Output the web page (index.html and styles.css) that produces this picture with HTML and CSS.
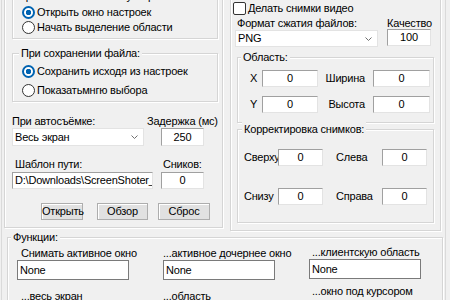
FILE: index.html
```html
<!DOCTYPE html>
<html lang="ru">
<head>
    <meta charset="UTF-8">
    <meta name="viewport" content="width=device-width, initial-scale=1.0">
    <title>Настройки ScreenShoter</title>
    <link rel="stylesheet" href="styles.css">
</head>
<body>

<div class="page">
    <div class="columns">

        <!-- левая колонка -->
        <div class="panel panel-left">
            <div class="group group-start">
                <div class="group-title">При нажатии на иконку в трее:</div>
                <div class="options">
                    <div class="option"><span class="radio on"></span>Открыть окно настроек</div>
                    <div class="option"><span class="radio"></span>Начать выделение области</div>
                </div>
            </div>

            <div class="group group-save">
                <div class="group-title">При сохранении файла:</div>
                <div class="options">
                    <div class="option"><span class="radio on"></span>Сохранить исходя из настроек</div>
                    <div class="option"><span class="radio"></span>Показатьмнгю выбора</div>
                </div>
            </div>

            <div class="row row-label row-auto">
                <span class="lbl-auto">При автосъёмке:</span>
                <span>Задержка (мс)</span>
            </div>
            <div class="row row-auto-ctrl">
                <div class="combo combo-auto">Весь экран
                    <svg viewBox="0 0 7 4"><polyline points="0.5,0.5 3.5,3.5 6.5,0.5"/></svg>
                </div>
                <div class="edit num edit-small">250</div>
            </div>

            <div class="row row-label row-path">
                <span class="lbl-path">Шаблон пути:</span>
                <span>Сников:</span>
            </div>
            <div class="row row-path-ctrl">
                <div class="edit edit-path">D:\Downloads\ScreenShoter_\</div>
                <div class="edit num edit-small">0</div>
            </div>

            <div class="buttons">
                <div class="btn btn-open">Открыть</div>
                <div class="btn btn-browse">Обзор</div>
                <div class="btn btn-reset">Сброс</div>
            </div>
        </div>

        <!-- правая колонка -->
        <div class="panel panel-right">
            <div class="check-row"><span class="check"></span>Делать снимки видео</div>

            <div class="row row-label row-format">
                <span class="lbl-format">Формат сжатия файлов:</span>
                <span>Качество</span>
            </div>
            <div class="row row-format-ctrl">
                <div class="combo combo-format">PNG
                    <svg viewBox="0 0 7 4"><polyline points="0.5,0.5 3.5,3.5 6.5,0.5"/></svg>
                </div>
                <div class="edit num edit-quality">100</div>
            </div>

            <div class="group group-area">
                <div class="group-title">Область:</div>
                <div class="area-row">
                    <span class="area-lbl">X</span>
                    <div class="edit num edit-x">0</div>
                    <span class="area-lbl2">Ширина</span>
                    <div class="edit num edit-w">0</div>
                </div>
                <div class="area-row area-row2">
                    <span class="area-lbl">Y</span>
                    <div class="edit num edit-x">0</div>
                    <span class="area-lbl2">Высота</span>
                    <div class="edit num edit-w">0</div>
                </div>
            </div>

            <div class="group group-fix">
                <div class="group-title">Корректировка снимков:</div>
                <div class="fix-row">
                    <span class="fix-lbl">Сверху</span>
                    <div class="edit num edit-fix">0</div>
                    <span class="fix-lbl2">Слева</span>
                    <div class="edit num edit-fix">0</div>
                </div>
                <div class="fix-row fix-row2">
                    <span class="fix-lbl">Снизу</span>
                    <div class="edit num edit-fix">0</div>
                    <span class="fix-lbl2">Справа</span>
                    <div class="edit num edit-fix">0</div>
                </div>
            </div>
        </div>
    </div>

    <!-- горячие клавиши -->
    <div class="group group-keys">
        <div class="group-title">Функции:</div>
        <div class="keys">
            <div class="key-col key-col1">
                <span class="key-lbl">Снимать активное окно</span>
                <div class="edit flat key-edit">None</div>
                <span class="key-lbl key-lbl2">...весь экран</span>
            </div>
            <div class="key-col key-col2">
                <span class="key-lbl">...активное дочернее окно</span>
                <div class="edit flat key-edit">None</div>
                <span class="key-lbl key-lbl2">...область</span>
            </div>
            <div class="key-col key-col3">
                <span class="key-lbl">...клиентскую область</span>
                <div class="edit flat key-edit">None</div>
                <span class="key-lbl key-lbl2">...окно под курсором</span>
            </div>
        </div>
    </div>
</div>

</body>
</html>
```

FILE: styles.css
```css
body {
    margin: 0;
    background-color: #f0f0f0;
    font-family: "Liberation Sans", Arial, sans-serif;
    font-size: 11px;
    line-height: 15px;
    letter-spacing: -0.2px;
    color: #000;
    overflow: hidden;
}
.page {
    margin: -20px 4px 0 1px;
    border: 1px solid #dadada;
    height: 340px;
}
.columns {
    display: flex;
    align-items: flex-start;
    gap: 7px;
    padding-left: 2px;
}
.panel, .group {
    box-sizing: border-box;
    border: 1px solid #d5d5d5;
    box-shadow: inset 1px 1px 0 #fff, 1px 1px 0 #fff;
}
.panel-left {
    width: 219px;
    height: 247px;
    padding: 0 4px 0 7px;
}
.panel-right {
    width: 211px;
    height: 250px;
    padding: 0 6px 0 2px;
}
.group-title {
    width: fit-content;
    margin: -8px 0 0 3px;
    padding: 0 2px;
    background-color: #f0f0f0;
    white-space: nowrap;
}

/* радиокнопки */
.group-start {
    margin-top: 14px;
    padding-bottom: 3px;
}
.group-save {
    margin-top: 14px;
    padding-bottom: 1px;
}
.group-save .group-title {
    margin-left: 6px;
}
.options {
    padding-top: 1px;
}
.option {
    display: flex;
    align-items: center;
    gap: 2px;
    height: 15px;
    margin-left: 9px;
    white-space: nowrap;
}
.group-save .option {
    height: 19px;
}
.radio {
    box-sizing: border-box;
    width: 13px;
    height: 13px;
    border: 1px solid #333;
    border-radius: 50%;
    background-color: #fff;
}
.radio.on {
    border: 2px solid #0063b1;
    background: radial-gradient(circle, #0063b1 0 2.5px, #fff 3px);
}

/* поля */
.row {
    display: flex;
    white-space: nowrap;
}
.row-label {
    height: 14px;
}
.row-auto {
    margin-top: 12px;
}
.lbl-auto {
    width: 135px;
}
.row-auto-ctrl {
    height: 18px;
}
.row-path {
    margin-top: 11px;
    height: 15px;
}
.lbl-path {
    width: 148px;
    margin-left: 3px;
}
.row-path-ctrl {
    height: 17px;
}
.combo {
    box-sizing: border-box;
    display: flex;
    align-items: center;
    justify-content: space-between;
    background-color: #fff;
    border: 1px solid #e3e3e3;
    padding: 0 5px 0 2px;
}
.combo svg {
    width: 7px;
    height: 4px;
    fill: none;
    stroke: #707070;
    stroke-width: 1;
}
.combo-auto {
    width: 132px;
    margin-right: 17px;
}
.edit {
    box-sizing: border-box;
    display: flex;
    align-items: center;
    background-color: #fff;
    border: 1px solid;
    border-color: #a0a0a0 #e3e3e3 #e3e3e3 #a0a0a0;
    padding: 0 2px;
    white-space: nowrap;
    overflow: hidden;
}
.edit.num {
    justify-content: center;
}
.edit.flat {
    border-color: #7a7a7a;
}
.edit-small {
    width: 43px;
}
.edit-path {
    width: 141px;
    margin-right: 8px;
}

/* кнопки */
.buttons {
    display: flex;
    height: 17px;
    margin-top: 14px;
    padding-left: 29px;
}
.btn {
    box-sizing: border-box;
    border: 1px solid #adadad;
    background-color: #e1e1e1;
    box-shadow: inset 1px 1px 0 #fff;
    text-align: center;
    line-height: 15px;
}
.btn-open {
    width: 42px;
    margin-right: 14px;
}
.btn-browse {
    width: 51px;
    margin-right: 10px;
}
.btn-reset {
    width: 52px;
}

/* правая колонка */
.check-row {
    display: flex;
    align-items: center;
    gap: 2px;
    height: 15px;
    margin-top: 19px;
    white-space: nowrap;
}
.check {
    box-sizing: border-box;
    width: 13px;
    height: 13px;
    border: 1px solid #333;
    border-radius: 2px;
    background-color: #fff;
}
.row-format {
    height: 13px;
}
.lbl-format {
    width: 150px;
    margin-left: 4px;
}
.row-format-ctrl {
    height: 18px;
}
.combo-format {
    width: 143px;
    height: 17px;
    margin: 1px 9px 0 2px;
}
.edit-quality {
    width: 44px;
    height: 17px;
}
.group-area {
    margin: 10px 0 0 4px;
    padding-bottom: 9px;
}
.area-row, .fix-row {
    display: flex;
    height: 17px;
    align-items: center;
    white-space: nowrap;
}
.area-row {
    margin-top: 5px;
}
.area-row2 {
    margin-top: 9px;
}
.area-lbl {
    width: 12px;
    margin-left: 12px;
}
.edit-x {
    width: 56px;
    height: 17px;
}
.area-lbl2 {
    box-sizing: border-box;
    width: 55px;
    padding-right: 8px;
    text-align: right;
}
.edit-w {
    width: 57px;
    height: 17px;
}
.group-fix {
    margin: 6px 0 0 4px;
    padding-bottom: 17px;
}
.group-fix .group-title {
    margin-left: 4px;
}
.fix-row {
    margin-top: 12px;
}
.fix-row2 {
    margin-top: 22px;
}
.fix-lbl {
    width: 34px;
    margin-left: 6px;
}
.fix-lbl2 {
    width: 46px;
    margin-left: 13px;
}
.edit-fix {
    width: 45px;
    height: 17px;
}

/* функции */
.group-keys {
    margin: 6px 2px 0 5px;
    height: 80px;
}
.keys {
    display: grid;
    grid-template-columns: repeat(3, 112px);
    column-gap: 34px;
    padding-left: 9px;
    margin-top: 1px;
}
.key-col {
    display: flex;
    flex-direction: column;
    white-space: nowrap;
}
.key-lbl {
    height: 14px;
}
.key-col1 .key-lbl {
    margin-left: 4px;
}
.key-col3 {
    margin-top: -1px;
}
.key-col3 .key-lbl {
    margin-left: 3px;
}
.key-edit {
    height: 20px;
}
.key-lbl2 {
    margin-top: 9px;
}
.key-col3 .key-lbl2 {
    margin-top: 5px;
}
```
